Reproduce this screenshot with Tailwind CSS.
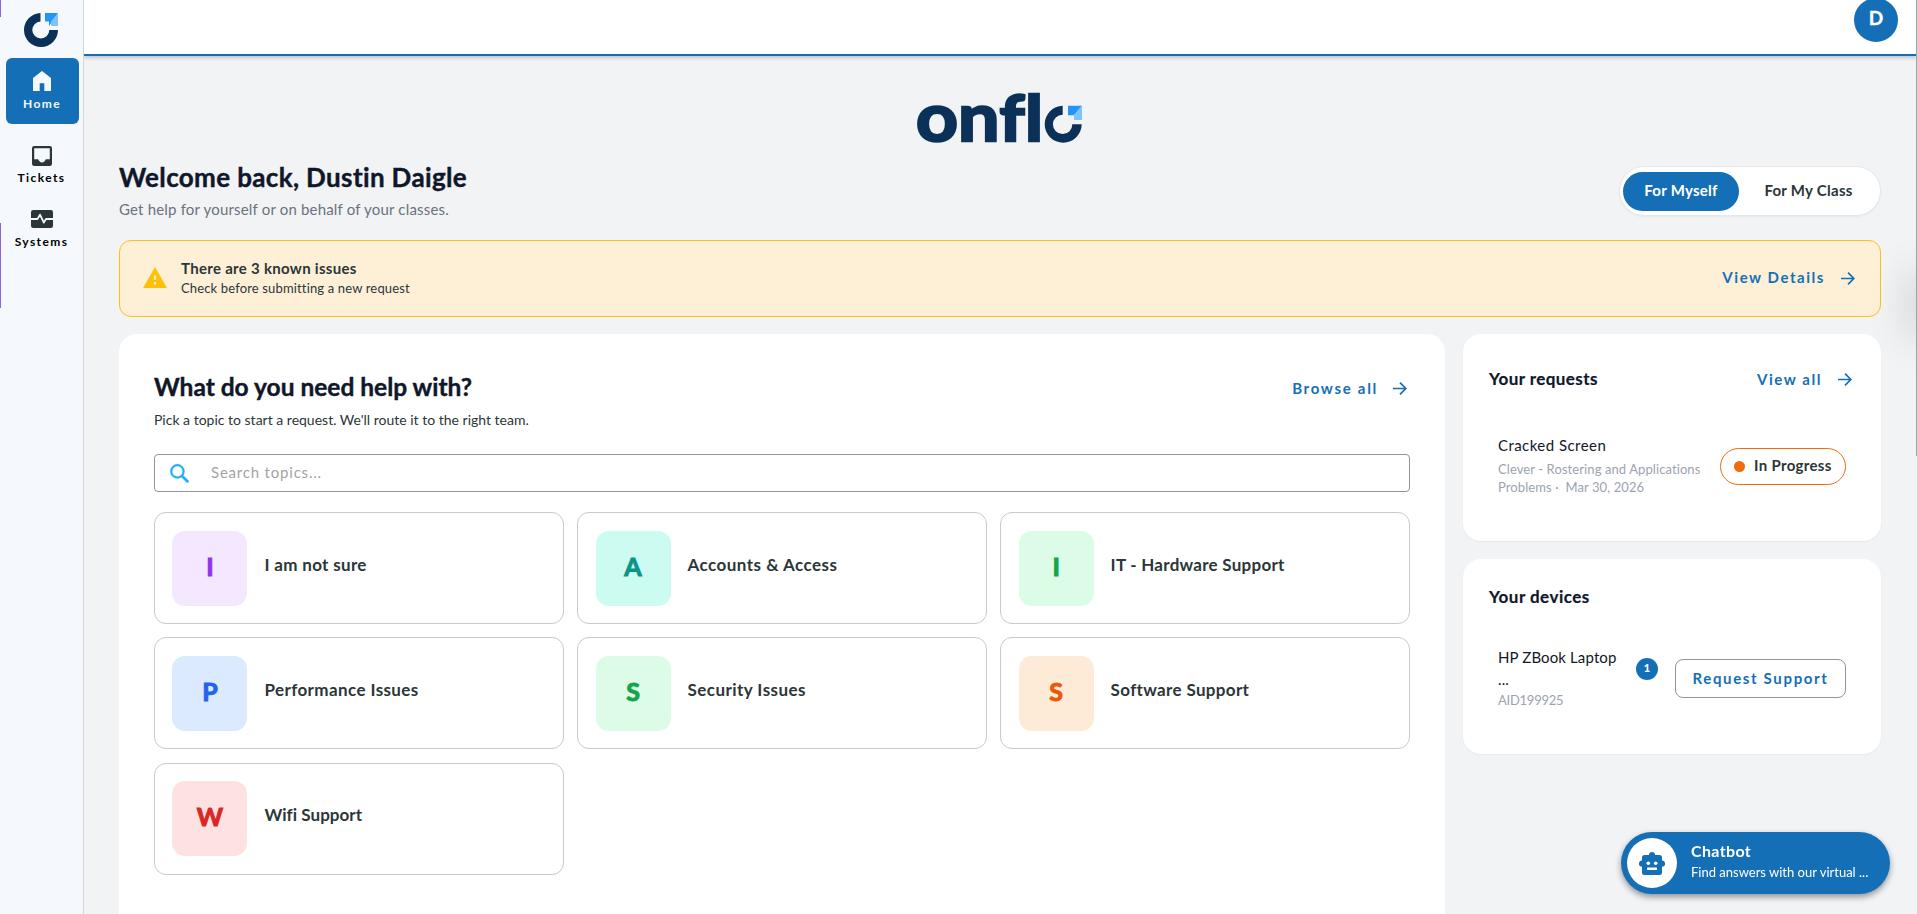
<!DOCTYPE html>
<html lang="en">
  <head>
    <meta charset="UTF-8" />
    <meta name="viewport" content="width=device-width, initial-scale=1.0" />
    <script src="https://cdn.jsdelivr.net/npm/@tailwindcss/browser@4"></script>
    <title>Onflo | Home</title>
  </head>
  <body class="h-screen flex overflow-hidden bg-[#f2f3f5] font-['Lato','Open_Sans',sans-serif] text-[#2b3638]">
    <!-- Sidebar -->
    <aside class="relative z-10 flex flex-col items-center w-[84px] h-full shrink-0 bg-[#f5f8fd] border-r border-[#d3d7dc]">
      <svg class="mt-[13px] mr-0.5 w-[35px] h-[34px]" viewBox="0 0 35 34">
        <path d="M17.5 0A17 17 0 1 0 35 17H26.3A8.5 8.5 0 1 1 17.5 8.5Z" fill="#0b3158" />
        <path d="M22 0H35L26 13V8.6H22Z" fill="#2196f8" />
        <path d="M35 0V13H28V8.6Z" fill="#7cc3ff" />
      </svg>
      <nav class="flex flex-col items-center mt-[11px] w-full text-xs font-bold text-black tracking-[1.4px]">
        <a href="#" class="flex flex-col items-center w-[73px] h-[66px] ml-0.5 pt-[13px] pr-px rounded-md bg-[#146fb7] text-[#f5f8fd]">
          <svg class="w-[18px] h-5" viewBox="0 0 18 20" fill="currentColor">
            <path d="M9 0L0 7V20H6.7V12.2H11.3V20H18V7Z" />
          </svg>
          <span class="mt-[3px] leading-5">Home</span>
        </a>
        <a href="#" class="flex flex-col items-center mt-[22px]">
          <svg class="w-5 h-5" viewBox="0 0 20 20" fill="#2b3638">
            <path fill-rule="evenodd" d="M2.2 0H17.8A2.2 2.2 0 0 1 20 2.2V17.8A2.2 2.2 0 0 1 17.8 20H2.2A2.2 2.2 0 0 1 0 17.8V2.2A2.2 2.2 0 0 1 2.2 0ZM2.2 2.2V13.3H6.2C6.9 15.2 8.3 16.5 10 16.5S13.1 15.2 13.8 13.3H17.8V2.2Z" />
          </svg>
          <span class="mt-1 leading-4">Tickets</span>
        </a>
        <a href="#" class="flex flex-col items-center mt-6">
          <svg class="ml-px w-[22px] h-[18px]" viewBox="0 0 22 18">
            <rect width="22" height="18" rx="2.2" fill="#2b3638" />
            <path d="M0 9H6.5L9 4.6L12.8 12.6L15 9H22" fill="none" stroke="#f5f8fd" stroke-width="1.8" stroke-linejoin="round" />
          </svg>
          <span class="mt-1.5 leading-4">Systems</span>
        </a>
      </nav>
      <div class="absolute left-0 top-0 w-px h-[17px] bg-[#9561e0]"></div>
      <div class="absolute left-0 top-[223px] w-px h-[85px] bg-[#9561e0]"></div>
    </aside>
    <!-- Content -->
    <div class="relative flex flex-col flex-1 h-full">
      <header class="flex justify-end h-14 shrink-0 pr-[19px] bg-white border-b-2 border-[#146fb7] shadow-[0_2px_4px_rgba(0,0,0,0.2)]">
        <div class="-mt-0.5 w-11 h-11 rounded-full bg-[#146fb7] text-white text-[19px] font-bold flex items-center justify-center pb-1 [-webkit-text-stroke:0.3px]">D</div>
      </header>
      <main class="flex flex-col flex-1 pl-[35px] pr-[36px] pt-[37px]">
        <svg class="w-[164px] h-[50px] mx-auto shrink-0 overflow-visible" viewBox="0 0 164 50" fill="#0b3158">
          <g class="font-bold text-[66px]" stroke="#0b3158" stroke-width="2.5">
            <text x="-2" y="47.5" textLength="42" lengthAdjust="spacingAndGlyphs">o</text>
            <text x="40" y="47.5" textLength="41.500" lengthAdjust="spacingAndGlyphs">n</text>
            <text x="81.500" y="47.500" class="text-[63px]" textLength="25" lengthAdjust="spacingAndGlyphs">f</text>
            <text x="107" y="47.500" class="text-[63px]" textLength="18" lengthAdjust="spacingAndGlyphs">l</text>
          </g>
          <path d="M144.700 12.700A18.500 18.500 0 1 0 163.700 31.300H154.300A9.700 9.700 0 1 1 144.700 21.700Z" />
          <path d="M150 12.700H164L156 22.300H150Z" fill="#2196f8" />
          <path d="M164 12.700V27H156V22Z" fill="#7cc3ff" />
        </svg>
        <!-- Greeting -->
        <div class="flex items-start justify-between mt-[14px] h-[83px] shrink-0">
          <div>
            <h1 class="text-[26px] leading-10 font-bold tracking-[0.36px] text-[#0f172a] [-webkit-text-stroke:0.4px]">Welcome back, Dustin Daigle</h1>
            <p class="mt-0.5 text-[15px] leading-5 tracking-[0.18px] text-[#6b7280]">Get help for yourself or on behalf of your classes.</p>
          </div>
          <div class="flex items-center mt-[9px] w-[262px] h-[50px] p-1 pl-[3px] rounded-full bg-white border border-[#e5e7eb] shadow-xs text-[15px] font-bold tracking-[0.27px]">
            <button class="w-[116px] h-[39px] pb-0.5 rounded-full bg-[#146fb7] text-white">For Myself</button>
            <button class="flex-1 h-[39px] pl-0.5 pb-0.5">For My Class</button>
          </div>
        </div>
        <!-- Known issues -->
        <div class="flex items-center h-[77px] shrink-0 pl-[23px] pr-[25px] rounded-xl border border-[#fbc013] bg-[#fef0d7]">
          <svg class="w-6 h-[21px] mb-0.5" viewBox="0 0 24 21">
            <path d="M12 0L24 21H0Z" fill="#ffc107" />
            <path d="M10.9 8.3H13.1V12.7H10.9ZM10.9 15H13.1V17.4H10.9Z" fill="#fef0d7" />
          </svg>
          <div class="ml-[14px] pb-0.5">
            <p class="text-[15px] leading-5 font-bold tracking-[0.3px]">There are 3 known issues</p>
            <p class="text-[13px] leading-5 tracking-[0.15px]">Check before submitting a new request</p>
          </div>
          <a href="#" class="flex items-center ml-auto text-[15px] font-bold tracking-[1.55px] text-[#146fb7]">
            <span class="pb-0.5">View Details</span>
            <svg class="ml-4 w-[14px] h-[13px]" viewBox="0 0 14 13" fill="none" stroke="currentColor" stroke-width="1.7">
              <path d="M0 6.5H12.6M7 0.7L12.8 6.5L7 12.3" />
            </svg>
          </a>
        </div>
        <div class="flex items-start gap-[18px] mt-[17px]">
          <!-- Topics -->
          <section class="w-[1326px] h-[620px] px-[35px] pt-[37px] rounded-[18px] bg-white">
            <div class="flex justify-between">
              <h2 class="text-[24.5px] leading-8 font-bold text-[#0f172a] [-webkit-text-stroke:0.4px]">What do you need help with?</h2>
              <a href="#" class="flex items-center mr-[3px] pt-0.5 text-[15px] font-bold tracking-[1.7px] text-[#146fb7]">
                <span>Browse all</span>
                <svg class="ml-[15px] w-[14px] h-[13px]" viewBox="0 0 14 13" fill="none" stroke="currentColor" stroke-width="1.7">
                  <path d="M0 6.5H12.6M7 0.7L12.8 6.5L7 12.3" />
                </svg>
              </a>
            </div>
            <p class="mt-[7px] text-sm leading-5">Pick a topic to start a request. We'll route it to the right team.</p>
            <div class="flex items-center mt-6 h-[38px] pl-[15px] rounded border border-[#949494]">
              <svg class="w-[19px] h-[19px]" viewBox="0 0 19 19" fill="none" stroke="#21b0fb" stroke-width="2.2">
                <circle cx="7.4" cy="7.4" r="6.2" />
                <path d="M11.8 11.8L18.2 18.2" stroke-width="2.7" />
              </svg>
              <span class="ml-[22px] pb-0.5 text-[15px] tracking-[0.8px] text-[#a3a3a3]">Search topics...</span>
            </div>
            <div class="grid grid-cols-3 gap-[13.33px] mt-5 text-[17px] font-bold">
              <div class="flex items-center h-28 pl-[17.4px] rounded-xl border border-[#cacaca]">
                <div class="flex items-center justify-center w-[75px] h-[75px] pb-[3px] rounded-[13px] bg-[#f3e8ff] text-[#9333ea] text-[25px] [-webkit-text-stroke:1px]">I</div>
                <span class="ml-[17px] pb-[7px] tracking-[0.33px]">I am not sure</span>
              </div>
              <div class="flex items-center h-28 pl-[17.4px] rounded-xl border border-[#cacaca]">
                <div class="flex items-center justify-center w-[75px] h-[75px] pb-[3px] rounded-[13px] bg-[#ccfbf1] text-[#0d9488] text-[25px] [-webkit-text-stroke:1px]">A</div>
                <span class="ml-[17px] pb-[7px] tracking-[0.47px]">Accounts &amp; Access</span>
              </div>
              <div class="flex items-center h-28 pl-[17.4px] rounded-xl border border-[#cacaca]">
                <div class="flex items-center justify-center w-[75px] h-[75px] pb-[3px] rounded-[13px] bg-[#dcfce7] text-[#16a34a] text-[25px] [-webkit-text-stroke:1px]">I</div>
                <span class="ml-[17px] pb-[7px] tracking-[0.26px]">IT - Hardware Support</span>
              </div>
              <div class="flex items-center h-28 pl-[17.4px] rounded-xl border border-[#cacaca]">
                <div class="flex items-center justify-center w-[75px] h-[75px] pb-[3px] rounded-[13px] bg-[#dbeafe] text-[#2563eb] text-[25px] [-webkit-text-stroke:1px]">P</div>
                <span class="ml-[17px] pb-[7px] tracking-[0.4px]">Performance Issues</span>
              </div>
              <div class="flex items-center h-28 pl-[17.4px] rounded-xl border border-[#cacaca]">
                <div class="flex items-center justify-center w-[75px] h-[75px] pb-[3px] rounded-[13px] bg-[#dcfce7] text-[#16a34a] text-[25px] [-webkit-text-stroke:1px]">S</div>
                <span class="ml-[17px] pb-[7px] tracking-[0.45px]">Security Issues</span>
              </div>
              <div class="flex items-center h-28 pl-[17.4px] rounded-xl border border-[#cacaca]">
                <div class="flex items-center justify-center w-[75px] h-[75px] pb-[3px] rounded-[13px] bg-[#fdebd7] text-[#ea580c] text-[25px] [-webkit-text-stroke:1px]">S</div>
                <span class="ml-[17px] pb-[7px] tracking-[0.34px]">Software Support</span>
              </div>
              <div class="flex items-center h-28 pl-[17.4px] rounded-xl border border-[#cacaca]">
                <div class="flex items-center justify-center w-[75px] h-[75px] pb-[3px] rounded-[13px] bg-[#fee2e2] text-[#dc2626] text-[25px] [-webkit-text-stroke:1px]">W</div>
                <span class="ml-[17px] pb-[7px] tracking-[0.05px]">Wifi Support</span>
              </div>
            </div>
          </section>
          <div class="flex flex-col gap-[18px] flex-1">
            <!-- Your requests -->
            <section class="h-[207px] pl-[26px] pr-[29px] pt-[30px] rounded-[18px] bg-white shadow-xs">
              <div class="flex items-center justify-between h-[30px]">
                <h3 class="text-[17px] font-bold tracking-[0.42px] text-[#0f172a] [-webkit-text-stroke:0.2px]">Your requests</h3>
                <a href="#" class="flex items-center text-[15px] font-bold tracking-[1.55px] text-[#146fb7]">
                  <span>View all</span>
                  <svg class="ml-4 w-[14px] h-[13px]" viewBox="0 0 14 13" fill="none" stroke="currentColor" stroke-width="1.7">
                    <path d="M0 6.5H12.6M7 0.7L12.8 6.5L7 12.3" />
                  </svg>
                </a>
              </div>
              <div class="flex items-start justify-between mt-10 pl-[9px] pr-1.5">
                <div>
                  <p class="text-[15px] leading-[22px] tracking-[0.45px] text-[#111827]">Cracked Screen</p>
                  <p class="mt-1 text-[13px] leading-[18px] tracking-[0.09px] text-[#9ca3af] whitespace-nowrap">Clever - Rostering and Applications<br />Problems ·&nbsp; Mar 30, 2026</p>
                </div>
                <div class="flex items-center mt-[14px] w-[126px] h-[37px] pl-[13px] rounded-full border border-[#ed6c10]">
                  <span class="w-[11px] h-[11px] rounded-full bg-[#ed6c10]"></span>
                  <span class="ml-[9px] pb-[3px] text-[15px] font-bold tracking-[0.33px]">In Progress</span>
                </div>
              </div>
            </section>
            <!-- Your devices -->
            <section class="h-[195px] pl-[26px] pr-[30px] pt-[23px] rounded-[18px] bg-white shadow-xs">
              <h3 class="text-[17px] leading-[30px] font-bold tracking-[0.48px] text-[#0f172a] [-webkit-text-stroke:0.2px]">Your devices</h3>
              <div class="flex items-start mt-[34px] pl-[9px] pr-[5px]">
                <div class="w-[138px]">
                  <p class="text-[15px] leading-[22px] tracking-[0.12px] text-[#111827]">HP ZBook Laptop<br />...</p>
                  <p class="mt-px text-[13px] leading-[18px] tracking-[-0.25px] text-[#9ca3af]">AID199925</p>
                </div>
                <div class="flex items-center justify-center mt-3 w-[22px] h-[22px] pb-0.5 rounded-full bg-[#146fb7] text-white text-[11px] font-black">1</div>
                <button class="ml-auto mt-[13px] w-[171px] h-[39px] rounded-lg border border-[#949494] text-[15px] font-bold tracking-[1.65px] text-[#146fb7]">Request Support</button>
              </div>
            </section>
          </div>
        </div>
      </main>
      <!-- Edge handle, its shadow falls into the page -->
      <div class="absolute -right-2.5 top-[280px] w-2.5 h-[50px] shadow-[0_0_40px_8px_rgba(0,0,0,0.16)]"></div>
      <div class="absolute right-0 top-0 w-px h-[456px] bg-[#a0a2a6]"></div>
    </div>
    <!-- Chatbot -->
    <div class="fixed left-[1621px] top-[832px] flex items-center w-[269px] h-[62px] pl-1.5 rounded-full bg-[#146fb7] text-white shadow-[0_3px_6px_rgba(0,0,0,0.4)]">
      <div class="flex items-center justify-center w-[50px] h-[50px] rounded-full bg-white">
        <svg class="w-[26px] h-[23px]" viewBox="0 0 26 23">
          <path d="M10 3A3 3 0 0 1 16 3H20.5A2.5 2.5 0 0 1 23 5.5V8.6A3.1 3.1 0 0 1 23 14.8V20.5A2.5 2.5 0 0 1 20.5 23H5.5A2.5 2.5 0 0 1 3 20.5V14.8A3.1 3.1 0 0 1 3 8.6V5.5A2.5 2.5 0 0 1 5.5 3Z" fill="#146fb7" />
          <circle cx="9.3" cy="11.3" r="1.8" fill="#fff" />
          <circle cx="16.7" cy="11.3" r="1.8" fill="#fff" />
          <path d="M8 15.5H18V18H8Z" fill="#fff" />
        </svg>
      </div>
      <div class="ml-[14px] pb-[3px]">
        <p class="text-base leading-5 font-bold tracking-[0.35px]">Chatbot</p>
        <p class="mt-px text-[13px] leading-5">Find answers with our virtual ...</p>
      </div>
    </div>
  </body>
</html>
